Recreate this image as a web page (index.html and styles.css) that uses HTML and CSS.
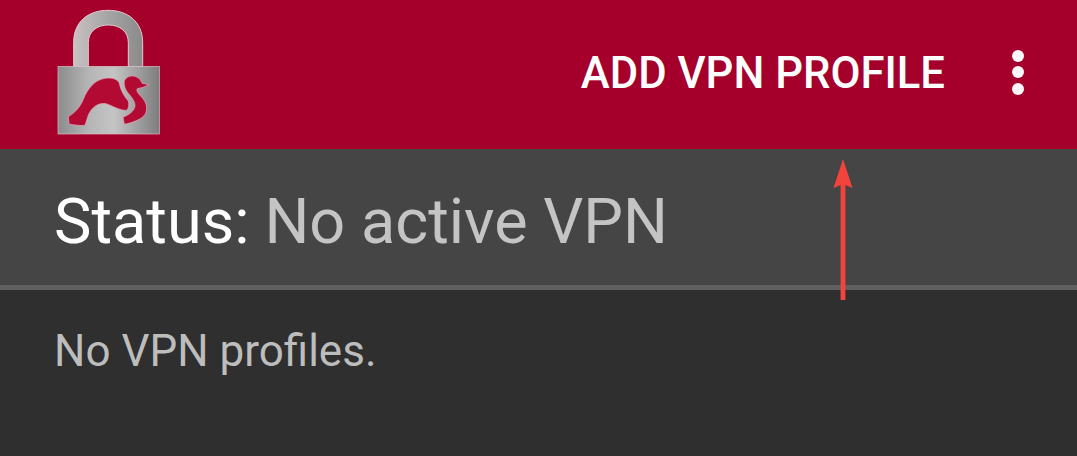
FILE: index.html
```html
<!DOCTYPE html>
<html lang="en">
<head>
<meta charset="utf-8">
<title>VPN</title>
<link rel="stylesheet" href="styles.css">
</head>
<body>
<div class="app">
  <header class="toolbar">
    <svg class="logo" viewBox="0 0 480 447" aria-hidden="true">
      <defs>
        <linearGradient id="metal" x1="0" y1="0" x2="1" y2="0">
          <stop offset="0" stop-color="#8b8b8b"/>
          <stop offset=".3" stop-color="#b5b5b5"/>
          <stop offset=".55" stop-color="#c4c4c4"/>
          <stop offset="1" stop-color="#7e7e7e"/>
        </linearGradient>
        <linearGradient id="shackle" x1="0" y1="0" x2="1" y2="0">
          <stop offset="0" stop-color="#c9c0c2"/>
          <stop offset=".5" stop-color="#a5a5a5"/>
          <stop offset="1" stop-color="#8a8a8a"/>
        </linearGradient>
      </defs>
      <path fill="url(#shackle)" stroke="#e3c9cf" stroke-width="3" d="M131 200V128C131 65 175 31 234 31C293 31 338 65 338 128V200H295V128C295 95 270 75 235 75C200 75 175 95 175 128V200Z"/>
      <rect x="84" y="199" width="304" height="203" fill="url(#metal)" stroke="#d8c4c8" stroke-width="2"/>
      <path fill="#b20a33" stroke="#e3a9b6" stroke-width="2" d="M115 350C135 338 150 322 160 298C172 268 192 240 225 235C248 232 263 238 268 250C272 272 283 290 295 303C298 315 296 325 290 331C268 331 250 318 228 311C205 307 185 322 175 345L165 376C150 378 130 374 117 372Z"/>
      <path fill="#b20a33" stroke="#e3a9b6" stroke-width="2" d="M284 240C292 226 315 222 330 238L337 250L357 254L340 262L322 266C318 272 324 280 332 288C348 304 354 322 347 340C338 358 308 368 283 373L279 351C297 345 312 334 315 318C316 305 305 292 295 280C285 268 280 252 284 240Z"/>
    </svg>
    <span class="action">ADD VPN PROFILE</span>
    <span class="overflow" aria-hidden="true"><i></i><i></i><i></i></span>
  </header>
  <section class="status">
    <span class="status-label">Status:</span>
    <span class="status-value">No active VPN</span>
  </section>
  <main class="list">
    <p class="empty">No VPN profiles.</p>
  </main>
  <svg class="arrow" viewBox="0 0 20 142" aria-hidden="true">
    <path fill="#f4423d" d="M10 0L19.5 29L12.4 26V141H7.6V26L.5 29Z"/>
  </svg>
</div>
</body>
</html>
```

FILE: styles.css
```css
html, body {
  margin: 0;
  padding: 0;
}

body {
  background: #2f2f2f;
  font-family: Roboto, "Liberation Sans", sans-serif;
  overflow: hidden;
}

.app {
  position: relative;
  display: flex;
  flex-direction: column;
  height: 456px;
}

.toolbar {
  display: flex;
  align-items: center;
  flex: 0 0 149px;
  padding: 0 53px 0 30px;
  box-sizing: border-box;
  background: #a4002b;
}

.logo {
  width: 160px;
  height: 149px;
  flex: none;
}

.action {
  margin-left: auto;
  margin-right: 67px;
  color: #fff;
  font-size: 43.6px;
  font-weight: 500;
  line-height: 1;
  position: relative;
  top: -1px;
}

.overflow {
  display: flex;
  flex-direction: column;
  gap: 4.5px;
  position: relative;
  top: -2.5px;
}

.overflow i {
  display: block;
  width: 12px;
  height: 12px;
  border-radius: 50%;
  background: #fdf5f7;
}

.status {
  display: flex;
  align-items: center;
  gap: 15px;
  flex: 0 0 141px;
  padding: 9px 0 0 54px;
  box-sizing: border-box;
  background: #454545;
  border-bottom: 5px solid #5f5f5f;
  font-size: 63px;
  line-height: 1;
}

.status-label {
  color: #fff;
}

.status-value {
  color: #c4c4c4;
}

.list {
  flex: 1;
  padding: 35px 0 0 54px;
  background: #2f2f2f;
}

.empty {
  margin: 0;
  color: #bdbdbd;
  font-size: 44px;
  line-height: 52px;
}

.arrow {
  position: absolute;
  left: 833px;
  top: 159px;
  width: 20px;
  height: 142px;
}
```
